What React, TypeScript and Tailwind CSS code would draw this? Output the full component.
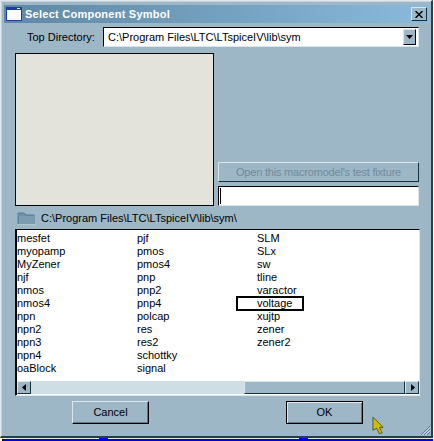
const font = { fontFamily: '"Liberation Sans", Arial, sans-serif' };

const columns = [
  ["mesfet", "myopamp", "MyZener", "njf", "nmos", "nmos4", "npn", "npn2", "npn3", "npn4", "oaBlock"],
  ["pjf", "pmos", "pmos4", "pnp", "pnp2", "pnp4", "polcap", "res", "res2", "schottky", "signal"],
  ["SLM", "SLx", "sw", "tline", "varactor", "voltage", "xujtp", "zener", "zener2"],
];

function ScrollArrow({ dir }: { dir: "left" | "right" }) {
  return (
    <div className="w-[14px] h-[13px] bg-[#9db7c6] border border-t-[#dbe6ec] border-l-[#dbe6ec] border-r-[#17323f] border-b-[#17323f] flex items-center justify-center shrink-0">
      <svg width="5" height="7" viewBox="0 0 5 7">
        {dir === "left" ? <path d="M4 0v7L0 3.5z" fill="#000" /> : <path d="M1 0v7l4-3.5z" fill="#000" />}
      </svg>
    </div>
  );
}

function DialogButton({ label, wide }: { label: string; wide?: boolean }) {
  return (
    <div
      className={`w-[77px] h-[23px] bg-[#9db7c6] flex items-center justify-center text-[11px] text-black border ${
        wide
          ? "border-black shadow-[inset_1px_1px_0_#dbe6ec,inset_-1px_-1px_0_#5d7787]"
          : "border-t-[#dbe6ec] border-l-[#dbe6ec] border-r-[#000] border-b-[#000] shadow-[inset_-1px_-1px_0_#5d7787]"
      }`}
    >
      {label}
    </div>
  );
}

export default function App() {
  return (
    <div className="w-[434px] h-[441px] bg-white overflow-hidden" style={font}>
      <div className="w-[433px] h-[438px] bg-[#9db7c6] border-t border-l border-[#dfe7ec] border-r-2 border-r-[#24404f] border-b-2 border-b-[#24404f] shadow-[inset_1px_1px_0_#c4d5de] pt-[4px] pl-[3px] pr-[1px] relative">
        <div className="h-[18px] w-[425px] bg-gradient-to-r from-[#5f88a3] to-[#8ab9dc] flex items-center pl-[2px] pr-[2px]">
          <svg width="16" height="14" viewBox="0 0 16 14" className="shrink-0">
            <rect width="16" height="14" fill="#1c3f9e" />
            <rect x="1" y="3" width="14" height="10" fill="#fff" />
            <rect x="11" y="1" width="3" height="1" fill="#cfe" />
          </svg>
          <span className="ml-[3px] text-white font-bold text-[11px] tracking-[0.25px] whitespace-nowrap">
            Select Component Symbol
          </span>
          <div className="ml-auto w-[16px] h-[14px] bg-[#9db7c6] border border-t-[#dbe6ec] border-l-[#dbe6ec] border-r-[#17323f] border-b-[#17323f] flex items-center justify-center">
            <svg width="8" height="7" viewBox="0 0 8 7">
              <path d="M0.5 0 L7.5 7 M7.5 0 L0.5 7" stroke="#000" strokeWidth="1.4" />
            </svg>
          </div>
        </div>

        <div className="mt-[4px] flex items-center h-[20px]">
          <span className="ml-[23px] w-[76px] text-[11px] text-black whitespace-nowrap">Top Directory:</span>
          <div className="w-[316px] h-[20px] bg-white border border-t-[#000] border-l-[#000] border-r-[#dbe6ec] border-b-[#dbe6ec] flex items-center pl-[4px] pr-[2px] text-[11px] text-black">
            <span className="whitespace-nowrap">C:\Program Files\LTC\LTspiceIV\lib\sym</span>
            <div className="ml-auto w-[13px] h-[16px] bg-[#9db7c6] border border-t-[#dbe6ec] border-l-[#dbe6ec] border-r-[#000] border-b-[#000] flex items-center justify-center">
              <svg width="7" height="4" viewBox="0 0 7 4">
                <path d="M0 0h7L3.5 4z" fill="#000" />
              </svg>
            </div>
          </div>
        </div>

        <div className="mt-[6px] ml-[11px] flex w-[404px] h-[153px]">
          <div className="w-[199px] h-[153px] bg-[#e3e3dc] border border-black shrink-0" />
          <div className="ml-[4px] w-[201px] flex flex-col justify-end">
            <div className="h-[20px] bg-[#9db7c6] border border-t-[#dbe6ec] border-l-[#dbe6ec] border-r-[#17323f] border-b-[#17323f] flex items-center justify-center text-[11px]">
              <span className="text-[#6f8a9a] tracking-[-0.2px] whitespace-nowrap">Open this macromodel's test fixture</span>
            </div>
            <div className="mt-[4px] h-[20px] bg-white border border-t-black border-l-black border-r-[#dbe6ec] border-b-[#dbe6ec] pl-[1px] py-[1px]">
              <div className="w-px h-full bg-black" />
            </div>
          </div>
        </div>

        <div className="mt-[3px] ml-[13px] h-[18px] flex items-center">
          <svg width="18" height="14" viewBox="0 0 18 14">
            <path d="M1 13V2h6l2 2h8v9z" fill="#6d8fa6" stroke="#587b92" />
            <path d="M2 5h15v8H2z" fill="#7c9cb2" />
            <path d="M1 14h17" stroke="#e6eef2" />
          </svg>
          <span className="ml-[6px] text-[11px] text-black whitespace-nowrap">C:\Program Files\LTC\LTspiceIV\lib\sym\</span>
        </div>

        <div className="mt-[2px] ml-[11px] w-[405px] h-[167px] bg-white border border-t-[#000] border-l-[#000] border-r-[#dbe6ec] border-b-[#dbe6ec] shadow-[inset_1px_0_0_#000] flex flex-col">
          <div className="flex-1 flex pl-[1px] pt-[2px] text-[11px] text-black">
            {columns.map((col) => (
              <div key={col[0]} className="w-[120px] flex flex-col">
                {col.map((item) =>
                  item === "voltage" ? (
                    <div key={item} className="h-[13px] leading-[13px] -ml-[20px] w-[66px] pl-[20px] outline-2 -outline-offset-1 outline-black whitespace-nowrap">
                      {item}
                    </div>
                  ) : (
                    <div key={item} className="h-[13px] leading-[13px] whitespace-nowrap">
                      {item}
                    </div>
                  ),
                )}
              </div>
            ))}
          </div>
          <div className="h-[13px] mb-px ml-px flex bg-[#cfdde5]">
            <ScrollArrow dir="left" />
            <div className="w-[213px]" />
            <div className="flex-1 bg-[#9db7c6] border border-t-[#dbe6ec] border-l-[#dbe6ec] border-r-[#17323f] border-b-[#17323f]" />
            <ScrollArrow dir="right" />
          </div>
        </div>

        <div className="mt-[5px] flex">
          <div className="ml-[68px]"><DialogButton label="Cancel" /></div>
          <div className="ml-[137px]"><DialogButton label="OK" wide /></div>
        </div>

        <svg width="13" height="19" viewBox="0 0 14 20" className="absolute left-[371px] top-[415px]">
          <path d="M1 1 L12 12 L8 12 L11 18 L8 19 L5 13 L1 15 Z" fill="#d0bf00" stroke="#3b3b00" strokeWidth="0.8" />
        </svg>
        <svg width="10" height="10" viewBox="0 0 10 10" className="absolute left-[420px] top-[425px]">
          <path d="M9 0L0 9M9 3L3 9M9 6L6 9" stroke="#5d7787" strokeWidth="1" />
          <path d="M9 1.5L1.5 9M9 4.5L4.5 9" stroke="#dbe6ec" strokeWidth="1" />
        </svg>
      </div>
      <div className="h-px ml-[2px] w-[431px] bg-[#ece8cf] flex">
        <div className="w-[97px]" />
        <div className="w-[9px] bg-[#0000f0]" />
        <div className="w-[191px]" />
        <div className="w-[9px] bg-[#0000f0]" />
      </div>
      <div className="h-[2px] ml-[2px] w-[431px] bg-[#0000e0] border-l border-black" />
    </div>
  );
}
